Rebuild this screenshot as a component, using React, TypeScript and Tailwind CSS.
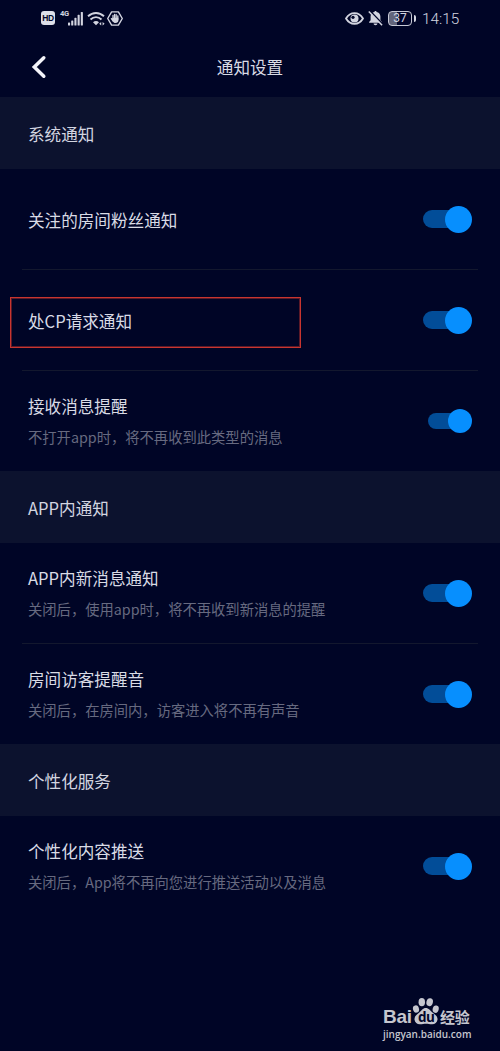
import React from 'react';

type Item = {
  title: string;
  desc?: string;
  small?: boolean;
  highlight?: boolean;
};

type Section = {
  heading: string;
  items: Item[];
};

const sections: Section[] = [
  {
    heading: '系统通知',
    items: [
      { title: '关注的房间粉丝通知' },
      { title: '处CP请求通知', highlight: true },
      { title: '接收消息提醒', desc: '不打开app时，将不再收到此类型的消息', small: true },
    ],
  },
  {
    heading: 'APP内通知',
    items: [
      { title: 'APP内新消息通知', desc: '关闭后，使用app时，将不再收到新消息的提醒' },
      { title: '房间访客提醒音', desc: '关闭后，在房间内，访客进入将不再有声音' },
    ],
  },
  {
    heading: '个性化服务',
    items: [{ title: '个性化内容推送', desc: '关闭后，App将不再向您进行推送活动以及消息' }],
  },
];

const StatusBar: React.FC = () => (
  <div className="flex h-9 items-center justify-between pl-[41px] pr-[40px] text-[#d3d5e0]">
    <div className="flex items-center">
      <span className="flex h-[14px] w-[14px] items-center justify-center rounded-[3px] bg-[#dddfe8] font-['Liberation_Sans',sans-serif] text-[8.5px] font-bold leading-none tracking-[-0.3px] text-[#02062a]">
        HD
      </span>
      <span className="ml-[5px] h-[16px] w-[9px] font-['Roboto',sans-serif] text-[7.5px] font-bold leading-[8px] tracking-[-0.4px]">4G</span>
      <svg className="-ml-[1px] h-[15px] w-[15px]" viewBox="0 0 15 15" fill="currentColor">
        <rect x="0" y="11.5" width="2.1" height="3" rx=".6" />
        <rect x="3.2" y="9.5" width="2.1" height="5" rx=".6" />
        <rect x="6.4" y="6.8" width="2.1" height="7.7" rx=".6" />
        <rect x="9.6" y="3.8" width="2.1" height="10.7" rx=".6" />
        <rect x="12.8" y="1" width="2.1" height="13.5" rx=".6" />
      </svg>
      <svg className="ml-[4px] h-[15px] w-[18px]" viewBox="0 0 18 15" fill="none" stroke="currentColor" strokeWidth="1.9">
        <path d="M1 5.3C5.8.9 12.2.9 17 5.3" />
        <path d="M3.5 8.5c3.3-3.1 7.7-3.1 11 0" />
        <path d="M6 11.2c1.8-1.5 4.2-1.5 6 0L9 14.3z" fill="currentColor" stroke="none" />
        <path d="M12.2 12.8l2-1.7v3.4zM17.6 12.8l-2-1.7v3.4z" fill="currentColor" stroke="none" />
      </svg>
      <svg className="ml-[2px] h-[15px] w-[16px]" viewBox="0 0 16 15">
        <path
          d="M4.6.9h6.8l3.9 6.6-3.9 6.6H4.6L.7 7.5z"
          fill="none"
          stroke="currentColor"
          strokeWidth="1.4"
          strokeLinejoin="round"
        />
        <g stroke="currentColor" strokeWidth="1.3" strokeLinecap="round" fill="none">
          <path d="M6 8V4.4M7.6 8V3.3M9.2 8V3.7M10.8 8.5V5M6 10L4.4 7.6" />
        </g>
        <path d="M5.4 6.8h6v2.5c0 1.7-1.2 2.8-2.8 2.8S5.9 11 5.4 9.5z" fill="currentColor" />
      </svg>
    </div>
    <div className="flex items-center">
      <svg className="h-[13px] w-[19px]" viewBox="0 0 19 13">
        <path
          d="M1 6.5C3 3.2 6 1.2 9.5 1.2s6.5 2 8.5 5.3c-2 3.3-5 5.3-8.5 5.3S3 9.8 1 6.5z"
          fill="none"
          stroke="currentColor"
          strokeWidth="1.8"
        />
        <circle cx="9.5" cy="6.5" r="4" fill="currentColor" />
        <circle cx="8" cy="5.3" r="1.6" fill="#02062a" />
      </svg>
      <svg className="ml-[4px] h-[16px] w-[15px]" viewBox="0 0 15 16">
        <path
          d="M7.5 1c.7 0 1.1.5 1.1 1.1 2.3.5 3.8 2.2 3.8 4.5v3.6l1.5 1.8v.8H1.1V12l1.5-1.8V6.6c0-2.3 1.5-4 3.8-4.5C6.4 1.5 6.8 1 7.5 1zM5.6 13.5h3.8c0 1-.8 1.7-1.9 1.7s-1.9-.7-1.9-1.7z"
          fill="currentColor"
        />
        <path d="M1.9.8L15 14.4" stroke="#02062a" strokeWidth="1.6" />
        <path d="M.8 1.6l13.3 13.6" stroke="currentColor" strokeWidth="1.5" />
      </svg>
      <div className="ml-[5px] flex h-[15px] w-6 items-center justify-center rounded-[4px] border-[1.5px] border-[#c8cad6] bg-linear-to-r from-[#62657b] from-35% to-[#02062a] to-35% font-['Roboto',sans-serif] text-[12px] leading-none">
        37
      </div>
      <div className="ml-[2px] h-[7px] w-[2px] rounded-r-sm bg-[#d3d5e0]" />
      <span className="ml-[6px] w-[38px] whitespace-nowrap pt-[2px] font-['Roboto',sans-serif] text-[15.3px] font-light leading-[16px]">
        14:15
      </span>
    </div>
  </div>
);

const Toggle: React.FC<{ small?: boolean }> = ({ small }) =>
  small ? (
    <div className="flex h-6 w-[44px] items-center">
      <div className="h-4 w-8 rounded-full bg-[#024d98]" />
      <div className="-ml-3 h-6 w-6 shrink-0 rounded-full bg-[#078ffe]" />
    </div>
  ) : (
    <div className="flex h-[27px] w-[49px] items-center">
      <div className="h-[18px] w-9 rounded-full bg-[#024d98]" />
      <div className="-ml-[14px] h-[27px] w-[27px] shrink-0 rounded-full bg-[#078ffe]" />
    </div>
  );

const Row: React.FC<{ item: Item; divider: boolean }> = ({ item, divider }) => (
  <div>
    <div className="relative flex h-[100px] items-center justify-between pl-7 pr-7">
      {item.highlight && (
        <div className="absolute left-[10px] top-[27px] h-[51px] w-[291px] border border-[#c8352f] shadow-[inset_0_0_0_1px_rgba(200,53,47,0.45)]" />
      )}
      <div className={item.desc ? 'pb-[1px]' : 'pt-[1px]'}>
        <p className="text-[16.6px] leading-6 text-[#d9dbe5]">{item.title}</p>
        {item.desc && <p className="mt-[9px] text-[14.3px] leading-[20px] text-[#676a80]">{item.desc}</p>}
      </div>
      <Toggle small={item.small} />
    </div>
    {divider && <div className="mx-[22px] h-px bg-[#13182e]" />}
  </div>
);

const Watermark: React.FC = () => (
  <div className="absolute left-[383px] top-[997px] w-[90px] text-[#c5c6ce]">
    <div className="flex h-7 items-start">
      <span className="w-[29px] pt-[9px] font-['Liberation_Sans',sans-serif] text-[19px] font-bold leading-[22px] tracking-[-0.3px]">Bai</span>
      <div className="relative h-7 w-[28px]">
        <svg className="h-7 w-[28px]" viewBox="1.5 0 26 28" preserveAspectRatio="none" fill="currentColor">
          <ellipse cx="5.2" cy="12" rx="2.8" ry="3.7" transform="rotate(-12 5.2 12)" />
          <ellipse cx="10.6" cy="5.2" rx="3" ry="4.1" />
          <ellipse cx="17.9" cy="5.2" rx="3" ry="4" transform="rotate(12 17.9 5.2)" />
          <ellipse cx="23.5" cy="12.2" rx="2.8" ry="3.7" transform="rotate(12 23.5 12.2)" />
          <path d="M14.3 11c2.8 0 4.1 2.6 6.2 4.6 2.2 2 5 3.6 4.7 6.9-.3 3.2-2.7 5-5.3 4.8-2-.2-3.4-.6-5.4-.6s-3.4.5-5.4.6c-2.6.2-5-1.6-5.3-4.8-.2-3.3 2.3-4.9 4.5-6.9 2.1-2 3.2-4.6 6-4.6z" />
        </svg>
        <span className="absolute left-[6px] top-[14px] font-['Open_Sans',sans-serif] text-[13.5px] font-bold leading-[12px] tracking-[-0.6px] text-[#02062a]">
          du
        </span>
      </div>
      <span className="whitespace-nowrap pt-[11px] text-[15px] font-bold leading-[18px] tracking-[-0.3px]">经验</span>
    </div>
    <p className="mt-[2px] whitespace-nowrap font-['Open_Sans',sans-serif] text-[10px] font-semibold leading-[14px]">jingyan.baidu.com</p>
  </div>
);

const App: React.FC = () => {
  return (
    <div className="relative h-[1051px] w-[500px] overflow-hidden bg-[#000526] font-['Noto_Sans_CJK_SC',sans-serif]">
      <StatusBar />

      {/* Title bar */}
      <header className="grid h-[61px] grid-cols-[80px_1fr_80px] items-center">
        <svg className="ml-[30px] h-6 w-[18px]" viewBox="0 0 18 24" fill="none" stroke="#f4f5fa" strokeWidth="3.5">
          <path d="M13.8 2.8L4.3 12l9.5 9.2" strokeLinecap="round" />
        </svg>
        <h1 className="pt-px text-center text-[16.6px] leading-6 text-[#d9dbe5]">通知设置</h1>
      </header>

      {sections.map((section) => (
        <section key={section.heading}>
          <h2 className="flex h-[72px] items-center bg-[#0c122e] pl-7 pt-[2px] text-[16.6px] text-[#d3d5e0]">{section.heading}</h2>
          {section.items.map((item, idx) => (
            <Row key={item.title} item={item} divider={idx < section.items.length - 1} />
          ))}
        </section>
      ))}

      <Watermark />
    </div>
  );
};

export default App;
